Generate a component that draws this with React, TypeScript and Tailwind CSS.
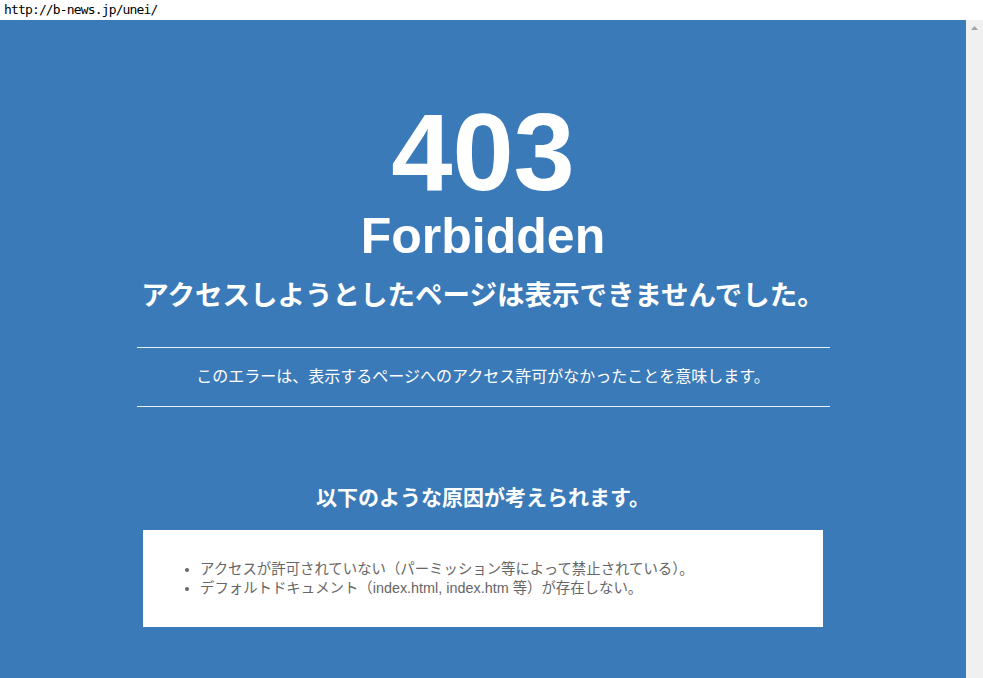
import React from "react";

const jp = "font-['Liberation_Sans','Noto_Sans_CJK_JP',sans-serif]";

export default function App() {
  const reasons = [
    "アクセスが許可されていない（パーミッション等によって禁止されている）。",
    "デフォルトドキュメント（index.html, index.htm 等）が存在しない。",
  ];

  return (
    <div className="w-[983px] h-[678px] overflow-hidden bg-white flex flex-col">
      <div className="h-[20px] shrink-0 pl-[4px] flex items-center text-[13px] text-black font-['DejaVu_Sans_Mono','Liberation_Mono',monospace] tracking-[-0.85px]">
        http://b-news.jp/unei/
      </div>
      <div className="flex flex-1 min-h-0">
        <div className={`flex-1 bg-[#3b7ab8] text-white ${jp}`}>
          <div className="w-[693px] mx-auto flex flex-col items-center text-center">
            <h1 className="mt-[84px] text-[110px] leading-[96px] font-bold">403</h1>
            <h2 className="mt-[11px] text-[50px] leading-none font-bold">Forbidden</h2>
            <p className="mt-[21px] text-[27.5px] leading-[28px] font-bold whitespace-nowrap">
              アクセスしようとしたページは表示できませんでした。
            </p>
            <div className="mt-[37px] w-full border-t border-[#e6eef6] h-[59px] flex items-center justify-center text-[16px] whitespace-nowrap">
              このエラーは、表示するページへのアクセス許可がなかったことを意味します。
            </div>
            <div className="w-full border-t border-[#e6eef6]" />
            <h3 className="mt-[80px] text-[21px] leading-none font-bold whitespace-nowrap">
              以下のような原因が考えられます。
            </h3>
            <div className="mt-[22px] w-[680px] h-[97px] bg-white flex items-center text-left">
              <ul className="pl-[57px] list-disc text-[14.4px] leading-[19px] text-[#666]">
                {reasons.map((r) => (
                  <li key={r}>{r}</li>
                ))}
              </ul>
            </div>
          </div>
        </div>
        <div className="w-[17px] shrink-0 bg-[#f0f0f0] flex justify-center pt-[6px]">
          <svg width="7" height="4" viewBox="0 0 7 4">
            <path d="M0 4 L3.5 0 L7 4 Z" fill="#a3a3a3" />
          </svg>
        </div>
      </div>
    </div>
  );
}
